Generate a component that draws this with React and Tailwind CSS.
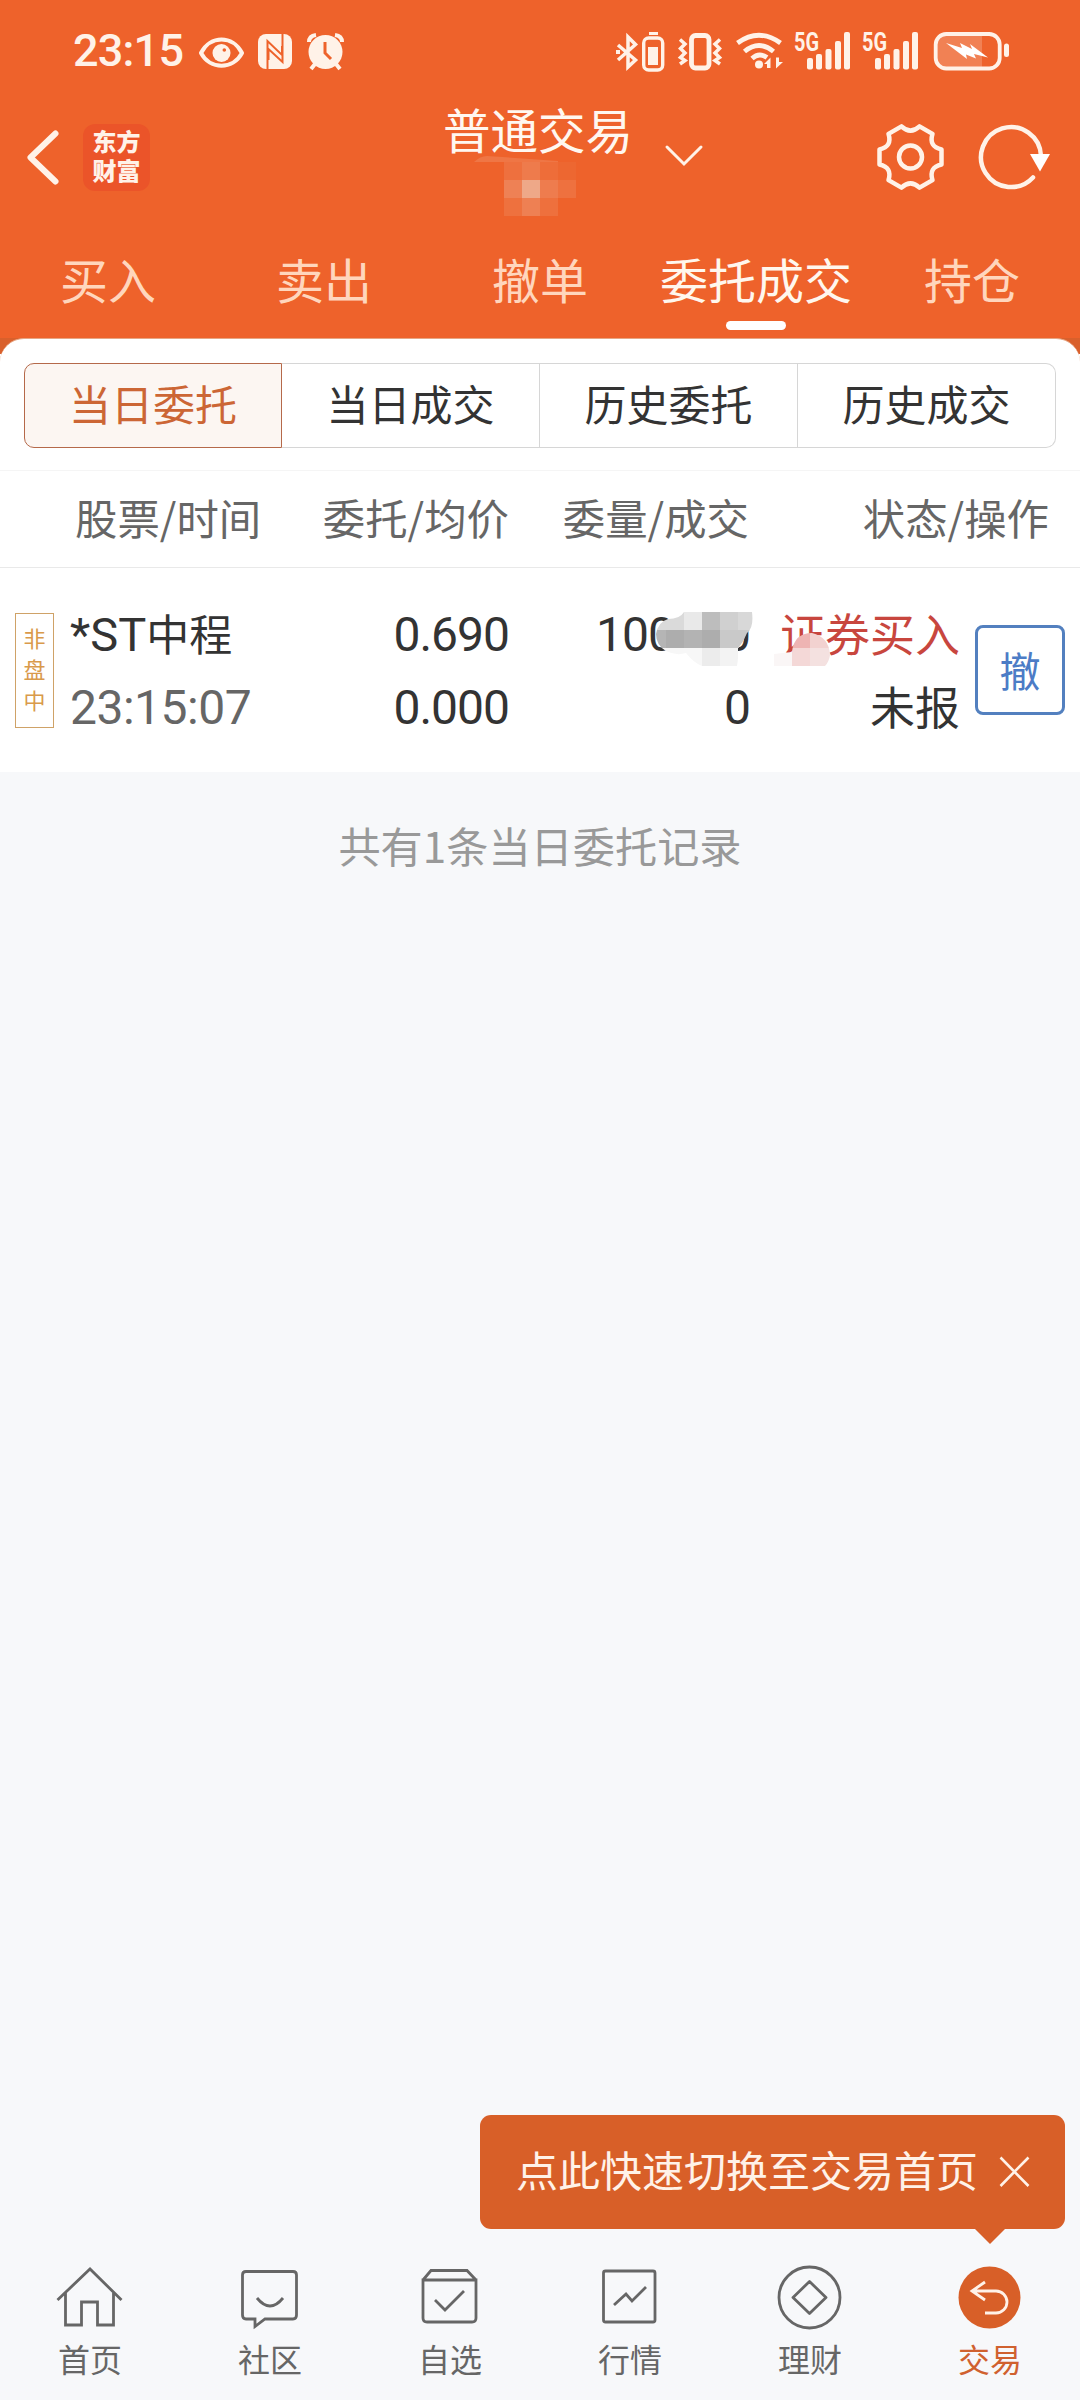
const Svg = ({ x, y, w, h, className = "", children }) => (
  <svg width={w} height={h} viewBox={`${x} ${y} ${w} ${h}`} className={"block shrink-0 " + className} fill="none">
    {children}
  </svg>
);

const Signal = ({ dx }) => (
  <g transform={`translate(${dx} 0)`}>
    <text x="794" y="51" textLength="25" lengthAdjust="spacingAndGlyphs" fontSize="26" fontWeight="700" fontFamily="Roboto, sans-serif" fill="#fff2e8">5G</text>
    {[[807, 58], [816, 54], [825.5, 49], [835, 41], [844, 32]].map(([x, y]) => (
      <rect key={x} x={x} y={y} width="6" height={69.5 - y} rx="2" fill="#fff2e8" />
    ))}
  </g>
);

function StatusBar() {
  return (
    <div className="flex h-[100px] items-start">
      <div className="ml-[73px] mt-[25px] h-[52px] w-[126px] font-[Roboto] text-[45px] leading-[52px] font-medium tracking-[-0.8px] text-[#fff2e8]">23:15</div>
      <Svg x={199} y={30} w={150} h={44} className="mt-[30px]">
        <path d="M201 53 C210 35 233 35 242 53 C233 70 210 70 201 53Z" stroke="#fff2e8" strokeWidth="4" strokeLinejoin="round" />
        <circle cx="221.5" cy="53" r="9" fill="#fff2e8" />
        <circle cx="224.3" cy="50" r="1.8" fill="#ee622b" />
        <rect x="258" y="34" width="34" height="35" rx="8" fill="#fff2e8" />
        <path d="M267.500 69 V41 L282 55 V46 M282.500 34 V62 L268.500 49 V60" stroke="#ee622b" strokeWidth="2" />
        <circle cx="325.500" cy="52" r="17" fill="#fff2e8" />
        <path d="M309 42 Q309 36 316 35 M342 42 Q342 36 335 35" stroke="#fff2e8" strokeWidth="4" />
        <path d="M315 64 L311 69 M336 64 L340 69" stroke="#fff2e8" strokeWidth="4" />
        <path d="M325 42 V53 L331 59" stroke="#ee622b" strokeWidth="3" />
      </Svg>
      <Svg x={614} y={28} w={400} h={48} className="ml-auto mr-[66px] mt-[28px]">
        <path d="M618 45 L635.500 60 L628 67 V37 L635.500 44.500 L618 60" stroke="#fff2e8" strokeWidth="3.500" />
        <rect x="616" y="50" width="4" height="4" fill="#fff2e8" />
        <rect x="643.700" y="38" width="19" height="32" rx="5" stroke="#fff2e8" strokeWidth="3.400" />
        <path d="M649 33.500 h9" stroke="#fff2e8" strokeWidth="3" />
        <rect x="648" y="47" width="10" height="18" fill="#fff2e8" />
        <rect x="691.500" y="35.500" width="17.500" height="32.500" rx="4" stroke="#fff2e8" strokeWidth="4.800" />
        <path d="M680 39.500 L685 44 L680.500 48.500 L685 53 L680.500 57.500 L685 60.500 L680 64 M720 39.500 L715 44 L719.500 48.500 L715 53 L719.500 57.500 L715 60.500 L720 64" stroke="#fff2e8" strokeWidth="3.500" />
        <path d="M737.500 43 Q759 27.500 780.500 43 M744.500 51.500 Q759 39.500 773.500 51.500 M752 58.500 Q759 52 767 57.500" stroke="#fff2e8" strokeWidth="4.800" />
        <circle cx="759" cy="64.500" r="4" fill="#fff2e8" />
        <path d="M764 64 L770.500 57.500 V68 H767 V64Z M783 62 L776 68.500 V57.500 H779 V62Z" fill="#fff2e8" />
        <Signal dx={0} />
        <Signal dx={68} />
        <path d="M946 34 H982 V69 H946 Q936 69 936 59 V44 Q936 34 946 34Z" fill="#fff2e8" fillOpacity=".22" />
        <rect x="935.700" y="34" width="64" height="34.500" rx="10.500" stroke="#fff2e8" strokeWidth="3.800" />
        <rect x="1004" y="43.500" width="5" height="13.500" rx="2.500" fill="#fff2e8" />
        <path d="M946 43 L962 48 L960 43 L972 49 L970 44 L988 57.500 L974 54 L976 58.500 L966 54.500 L967 59 Z" fill="#fff" />
      </Svg>
    </div>
  );
}

function TitleBar() {
  return (
    <div className="flex h-[135px] items-start">
      <Svg x={20} y={125} w={45} h={65} className="ml-[20px] mt-[25px]">
        <path d="M55.500 133.500 L30.500 157.500 L55.500 181.500" stroke="#fff2e8" strokeWidth="6" strokeLinecap="round" strokeLinejoin="round" />
      </Svg>
      <div className="ml-[18px] mt-[24px] flex h-[67px] w-[67px] justify-center rounded-xl bg-[#eb5429] pt-[2px]">
        <div className="w-[48px] text-[24px] leading-[29px] font-black break-all text-[#fff2e8]">东方财富</div>
      </div>
      <div className="ml-[293px] flex w-[191px] flex-col whitespace-nowrap">
        <div className="mt-px h-[56px] text-[47.5px] leading-[56px] text-[#fff7f0]">普通交易</div>
        <Svg x={460} y={155} w={130} h={65} className="-mt-[2px] ml-[17px]">
          <path d="M474 162 Q480 156 487 156 L558 161 V162Z" fill="#ef7645" />
          <rect x="504" y="162" width="18" height="18" fill="#ee703e" />
          <rect x="522" y="162" width="18" height="18" fill="#ee7b4c" />
          <rect x="540" y="162" width="18" height="18" fill="#ee6d39" />
          <rect x="558" y="162" width="18" height="18" fill="#ed6731" />
          <rect x="504" y="180" width="18" height="18" fill="#ee8155" />
          <rect x="522" y="180" width="18" height="18" fill="#eea888" />
          <rect x="540" y="180" width="18" height="18" fill="#ee7c4e" />
          <rect x="558" y="180" width="18" height="18" fill="#ee713f" />
          <rect x="504" y="198" width="18" height="18" fill="#ee713e" />
          <rect x="522" y="198" width="18" height="18" fill="#ee8053" />
          <rect x="540" y="198" width="18" height="18" fill="#ee703d" />
        </Svg>
      </div>
      <Svg x={660} y={140} w={50} h={30} className="ml-[26px] mt-[40px]">
        <path d="M667 147 L684 164 L701 147" stroke="#fff2e8" strokeWidth="3" strokeLinecap="round" />
      </Svg>
      <Svg x={870} y={117} w={190} h={80} className="ml-auto mr-[20px] mt-[17px]">
        <g transform="translate(910.500 157)" stroke="#fff2e8" strokeWidth="4.500" strokeLinejoin="round">
          <path d="M31 -7.500 V7.500 Q18 10.300 22 23.100 L9 30.600 Q0 22 -9 30.600 L-22 23.100 Q-18 10.300 -31 7.500 V-7.500 Q-18 -10.300 -22 -23.100 L-9 -30.600 Q0 -22 9 -30.600 L22 -23.100 Q18 -10.300 31 -7.500Z" />
          <circle r="11.500" />
        </g>
        <path d="M1041 156 A30 30 0 1 0 1033 177.500" stroke="#fff2e8" strokeWidth="4.500" strokeLinecap="round" />
        <path d="M1030 154 H1050 L1040 171.500Z" fill="#fff" />
      </Svg>
    </div>
  );
}

const tabs = ["买入", "卖出", "撤单", "委托成交", "持仓"];

function Tabs() {
  return (
    <div className="grid h-[103px] grid-cols-5">
      {tabs.map((t, i) => (
        <div key={t} className={"flex flex-col items-center whitespace-nowrap " + (i === 3 ? "text-[#fff7ee]" : "text-[#ffd6bd]")}>
          <div className="mt-[13px] h-[60px] text-[48px] leading-[60px]">{t}</div>
          {i === 3 && <div className="mt-[13px] h-[9px] w-[60px] rounded-full bg-white" />}
        </div>
      ))}
    </div>
  );
}

const segs = ["当日委托", "当日成交", "历史委托", "历史成交"];

function Order() {
  return (
    <div className="flex h-[204px] text-[#333]">
      <div className="ml-[15px] mt-[45px] flex h-[115px] w-[39px] flex-col items-center border border-[#cfa267] pt-[8px] text-[22px] leading-[31px] text-[#d99a4b]">
        <span>非</span><span>盘</span><span>中</span>
      </div>
      <div className="ml-[16px] w-[210px] pt-[28px] text-[43px] leading-[73px] whitespace-nowrap">
        <div className="h-[75px]"><span className="font-[Roboto] text-[47px] leading-[73px]">*ST</span>中程</div>
        <div className="h-[73px] font-[Roboto] text-[48px] tracking-[-0.5px] text-[#666]">23:15:07</div>
      </div>
      <div className="w-[229px] pt-[30px] text-right font-[Roboto] text-[48px] leading-[73px] tracking-[-1px]">
        <div>0.690</div>
        <div>0.000</div>
      </div>
      <div className="relative w-[241px] pt-[30px] text-right font-[Roboto] text-[48px] leading-[73px] tracking-[-1px]">
        <div className="flex justify-end"><span>100</span><span className="w-[50px]" /><span>0</span></div>
        <div>0</div>
        <Svg x={640} y={590} w={250} h={130} className="absolute left-[131px] top-[22px] z-10">
          <clipPath id="blotA">
            <path d="M684 612 H752 Q754 628 747 633 Q744 641 739 647 Q738 660 737 666 H702 Q694 663 686 653 Q676 656 666 651 Q656 645 656 634 Q658 622 668 619 Q680 619 684 612Z" />
          </clipPath>
          <g clipPath="url(#blotA)" shapeRendering="crispEdges">
            <rect x="648" y="612" width="36" height="18" fill="#dadada" />
            <rect x="684" y="612" width="18" height="18" fill="#e9e9e9" />
            <rect x="702" y="612" width="18" height="18" fill="#bdbdbd" />
            <rect x="720" y="612" width="18" height="18" fill="#d0d0d0" />
            <rect x="738" y="612" width="18" height="18" fill="#d8d8d8" />
            <rect x="648" y="630" width="18" height="18" fill="#b5b5b5" />
            <rect x="666" y="630" width="18" height="18" fill="#adadad" />
            <rect x="684" y="630" width="18" height="18" fill="#b3b3b3" />
            <rect x="702" y="630" width="18" height="18" fill="#adadad" />
            <rect x="720" y="630" width="36" height="18" fill="#c9c9c9" />
            <rect x="648" y="648" width="54" height="18" fill="#f7f7f7" />
            <rect x="702" y="648" width="18" height="18" fill="#ececec" />
            <rect x="720" y="648" width="18" height="18" fill="#f3f3f3" />
          </g>
          <clipPath id="blotB">
            <path d="M774 654 L792 652 Q794 633 812 633 Q829 637 830 655 Q829 662 825 666 H774Z" />
          </clipPath>
          <g clipPath="url(#blotB)" shapeRendering="crispEdges">
            <rect x="774" y="648" width="18" height="18" fill="#faf6f6" />
            <rect x="792" y="630" width="18" height="18" fill="#eeb4b3" />
            <rect x="810" y="630" width="22" height="18" fill="#f2d2d0" />
            <rect x="792" y="648" width="18" height="18" fill="#f4d8d7" />
            <rect x="810" y="648" width="22" height="18" fill="#f4e1e0" />
          </g>
        </Svg>
      </div>
      <div className="w-[210px] pt-[28px] text-right text-[45px] leading-[73px] whitespace-nowrap">
        <div className="text-[#c8463e]">证券买入</div>
        <div>未报</div>
      </div>
      <div className="ml-[15px] mt-[57px] flex h-[90px] w-[90px] items-center justify-center rounded-lg border-3 border-[#5380bf] pb-[3px] text-[41px] leading-[60px] text-[#4c7cc6]">撤</div>
    </div>
  );
}

const nav = [
  ["首页", <path key="i" d="M57.500 2300 L90 2269 L121.500 2300 M65.500 2293 V2325 H81.500 V2302 H97.500 V2325 H113.500 V2293" />],
  ["社区", <path key="i" d="M246 2271.500 H293 Q296.500 2271.500 296.500 2275 V2315 Q296.500 2319 293 2319 H265 L255 2326.500 V2319 H246 Q242.500 2319 242.500 2315 V2275 Q242.500 2271.500 246 2271.500Z M257 2298 Q270 2314 283 2298" />],
  ["自选", <path key="i" d="M423 2280 L431 2270.500 H467 L476 2280 M423 2280 H476 V2318 Q476 2322 472 2322 H427 Q423 2322 423 2318Z M435 2300 L445 2310 L464 2291" />],
  ["行情", <g key="i"><rect x="603.500" y="2271" width="51.500" height="51" rx="2" /><path d="M614 2305 L626 2294 L632 2301 L646 2287" /></g>],
  ["理财", <g key="i"><circle cx="809.500" cy="2297.500" r="30.500" /><path d="M809.500 2281.500 L826 2297.500 L809.500 2313.500 L793 2297.500Z" strokeLinejoin="round" /></g>],
  ["交易", <g key="i"><circle cx="989.500" cy="2297.500" r="31" fill="#d85f28" stroke="none" /><path d="M985 2282 L972 2291 L985 2300 M972 2291 H996 A11 11 0 0 1 996 2313 H985" stroke="#fff2e8" /></g>],
];

export default function App() {
  return (
    <div className="relative flex h-[2400px] w-[1080px] flex-col overflow-hidden bg-[#f7f8fa] font-['Noto_Sans_CJK_SC',sans-serif]">
      <header className="h-[338px] shrink-0 bg-[#ee622b]">
        <StatusBar />
        <TitleBar />
        <Tabs />
      </header>
      <div className="shrink-0 bg-[linear-gradient(#d9602c_16px,#fff_16px)]">
        <main className="h-[434px] rounded-t-[24px] border-t border-[#e6a684] bg-white">
          <div className="h-[132px] border-b border-[#f5f5f5] px-[24px] pt-[24px]">
            <div className="flex h-[85px] text-[42px] text-[#333]">
              {segs.map((s, i) => (
                <div
                  key={s}
                  className={
                    "flex h-full w-[258px] items-center justify-center border-y pb-[6px] " +
                    (i === 0
                      ? "rounded-l-[10px] border-x border-[#b5694a] bg-[#fcf6f2] text-[#cc6635]"
                      : i === 3
                        ? "rounded-r-[10px] border-r border-[#d6d6d6]"
                        : "border-r border-[#d6d6d6]")
                  }
                >
                  {s}
                </div>
              ))}
            </div>
          </div>
          <div className="flex h-[97px] border-b border-[#e9e9e9] pt-[16px] text-[42.4px] leading-[60px] whitespace-nowrap text-[#666]">
            <div className="ml-[75px] w-[185px]">股票/时间</div>
            <div className="w-[249px] text-right">委托/均价</div>
            <div className="w-[240px] text-right">委量/成交</div>
            <div className="w-[300px] text-right">状态/操作</div>
          </div>
          <Order />
        </main>
      </div>
      <p className="mt-[41px] text-center text-[42.2px] leading-[64px] text-[#999]">共有1条当日委托记录</p>

      <nav className="mt-auto grid h-[140px] grid-cols-6 text-[#666]">
        {nav.map(([label, icon], i) => (
          <div key={label} className={"flex flex-col items-center " + (i === 5 ? "text-[#d0612f]" : "")}>
            <Svg x={i * 180 + 50} y={2260} w={80} h={72}>
              <g stroke="currentColor" strokeWidth="2.800">{icon}</g>
            </Svg>
            <div className="mt-[6px] h-[40px] text-[32px] leading-[40px]">{label}</div>
          </div>
        ))}
      </nav>

      <div className="absolute top-[2115px] left-[480px] flex h-[114px] w-[585px] items-center rounded-[11px] bg-[#d85f28] pl-[36px] text-[42px] leading-[60px] whitespace-nowrap text-[#fff2e8]">
        <span className="pb-[7px]">点此快速切换至交易首页</span>
        <Svg x={998} y={2156} w={34} h={34} className="ml-[20px]">
          <path d="M1000.500 2158.500 L1028.500 2187 M1028.500 2158.500 L1000.500 2187" stroke="#fff2e8" strokeWidth="2.600" />
        </Svg>
        <svg width="30" height="15" viewBox="0 0 30 15" className="absolute top-full right-[60px]">
          <path d="M0 0 H30 L15 15Z" fill="#d85f28" />
        </svg>
      </div>
    </div>
  );
}
